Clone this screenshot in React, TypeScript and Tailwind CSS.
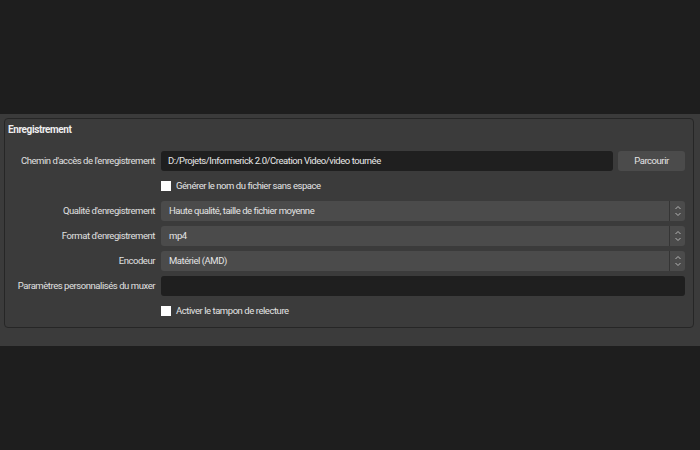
import React from "react";

const Arrows = () => (
  <div className="w-[16px] h-full border-l border-[#353535] flex flex-col items-center justify-center">
    <svg width="8" height="14" viewBox="0 0 8 14" fill="none" stroke="#b5b5b5" strokeWidth="1">
      <path d="M1.5 5 L4 2.5 L6.5 5" />
      <path d="M1.5 9 L4 11.5 L6.5 9" />
    </svg>
  </div>
);

const Combo = ({ value }: { value: string }) => (
  <div className="flex-1 h-[20px] bg-[#4b4b4b] rounded-[3px] flex items-center">
    <div className="flex-1 pl-[8px] text-[#e4e4e4] whitespace-nowrap">{value}</div>
    <Arrows />
  </div>
);

const Label = ({ children }: { children: React.ReactNode }) => (
  <div className="w-[150px] text-right text-[#e0e0e0] shrink-0 whitespace-nowrap">{children}</div>
);

const Check = ({ label }: { label: string }) => (
  <div className="flex items-center h-[20px]">
    <div className="w-[150px] shrink-0" />
    <div className="ml-[6px] w-[10px] h-[10px] bg-white" />
    <div className="ml-[5px] text-[#e4e4e4] whitespace-nowrap">{label}</div>
  </div>
);

export default function App() {
  return (
    <div
      className="w-[700px] h-[450px] bg-[#1e1e1e] flex flex-col text-[9.5px] tracking-[-0.45px]"
      style={{ fontFamily: 'Roboto, "Noto Sans", sans-serif' }}
    >
      <div className="h-[114px] shrink-0" />
      <div className="h-[232px] shrink-0 bg-[#3b3b3b] pl-[4px] pr-[6px] pt-[4px]">
        <div className="h-[210px] border border-[#262626] rounded-[4px] pr-[8px]">
          <div className="pl-[3px] h-[32px] pt-[3px] font-bold text-[#eeeeee] text-[10px] tracking-[-0.4px]">
            Enregistrement
          </div>
          <div className="flex flex-col gap-[5px]">
            <div className="flex items-center h-[20px]">
              <Label>Chemin d'accès de l'enregistrement</Label>
              <div className="ml-[6px] flex-1 h-[20px] bg-[#1f1f1f] rounded-[3px] flex items-center pl-[7px] text-[#e8e8e8] whitespace-nowrap">
                D:/Projets/Informerick 2.0/Creation Video/video tournée
              </div>
              <div className="ml-[5px] w-[67px] h-[20px] bg-[#4b4b4b] rounded-[3px] flex items-center justify-center text-[#e4e4e4]">
                Parcourir
              </div>
            </div>
            <Check label="Générer le nom du fichier sans espace" />
            <div className="flex items-center">
              <Label>Qualité d'enregistrement</Label>
              <div className="ml-[6px] flex-1 flex"><Combo value="Haute qualité, taille de fichier moyenne" /></div>
            </div>
            <div className="flex items-center">
              <Label>Format d'enregistrement</Label>
              <div className="ml-[6px] flex-1 flex"><Combo value="mp4" /></div>
            </div>
            <div className="flex items-center">
              <Label>Encodeur</Label>
              <div className="ml-[6px] flex-1 flex"><Combo value="Matériel (AMD)" /></div>
            </div>
            <div className="flex items-center">
              <Label>Paramètres personnalisés du muxer</Label>
              <div className="ml-[6px] flex-1 h-[20px] bg-[#1f1f1f] rounded-[3px]" />
            </div>
            <Check label="Activer le tampon de relecture" />
          </div>
        </div>
      </div>
    </div>
  );
}
